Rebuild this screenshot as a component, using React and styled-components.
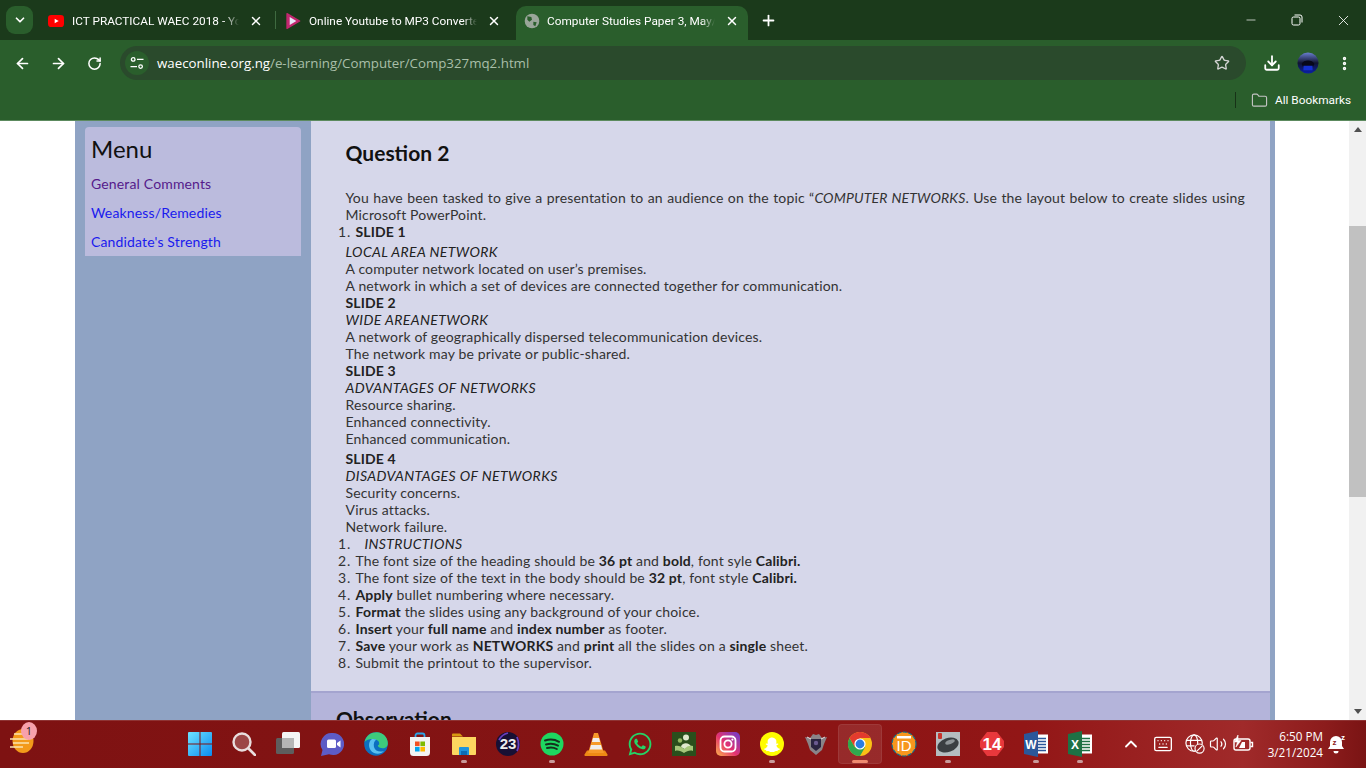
import React from "react";
import styled, { createGlobalStyle } from "styled-components";
import { ArrowLeft, ArrowRight, RotateCw, Star, Download, EllipsisVertical, Folder, X, Plus, Minus, ChevronDown, ChevronUp, Keyboard, Volume2 } from "lucide-react";
import { FaWhatsapp, FaSnapchatGhost } from "react-icons/fa";

const GlobalStyle = createGlobalStyle`
  html, body { margin: 0; padding: 0; height: 100%; overflow: hidden; }
  * { box-sizing: border-box; }
`;

const uiFont = `"Open Sans", "Noto Sans", sans-serif`;
const pageFont = `Lato, "Open Sans", sans-serif`;

const Screen = styled.div`
  width: 1366px;
  height: 768px;
  display: flex;
  flex-direction: column;
  overflow: hidden;
  font-family: ${uiFont};
`;

/* browser chrome */
const TabStrip = styled.div`
  height: 40px;
  flex: none;
  display: flex;
  align-items: flex-end;
  background: #1b3a1b;
  padding-left: 6px;
  color: #fff;
`;
const TabMenuButton = styled.div`
  width: 27px;
  height: 28px;
  margin-bottom: 6px;
  margin-right: 9px;
  border-radius: 9px;
  background: #2a5e2c;
  display: flex;
  align-items: center;
  justify-content: center;
`;
const Tab = styled.div`
  width: ${(p) => p.$w}px;
  height: 34px;
  display: flex;
  align-items: center;
  padding: 0 ${(p) => p.$end}px 5px ${(p) => p.$pad}px;
  position: relative;
  background: ${(p) => (p.$active ? "#2a5e2c" : "transparent")};
  border-radius: 10px 10px 0 0;
`;
const TabTitle = styled.span`
  flex: 1;
  margin: 0 10px 0 ${(p) => p.$gap}px;
  font-family: Roboto, sans-serif;
  font-size: 11.8px;
  white-space: nowrap;
  overflow: hidden;
  color: #fff;
  -webkit-mask-image: linear-gradient(to right, #000 92%, transparent);
  mask-image: linear-gradient(to right, #000 92%, transparent);
`;
const TabSeparator = styled.div`
  width: 1px;
  height: 18px;
  margin: 0 -1px 11px 0;
  background: #3f6a40;
`;
const NewTab = styled.div`
  width: 40px;
  height: 34px;
  padding-bottom: 6px;
  display: flex;
  align-items: center;
  justify-content: center;
`;
const WindowButtons = styled.div`
  margin-left: auto;
  display: flex;
  height: 40px;
  align-items: center;
`;
const WindowButton = styled.div`
  width: 46px;
  display: flex;
  justify-content: center;
  color: #fff;
`;

const Toolbar = styled.div`
  height: 40px;
  flex: none;
  display: flex;
  align-items: center;
  background: #2a5e2c;
  color: #fff;
  padding: 6px 0 0 4px;
`;
const NavButton = styled.div`
  width: 36px;
  display: flex;
  justify-content: center;
`;
const AddressBar = styled.div`
  width: 1126px;
  height: 34px;
  margin-left: 8px;
  border-radius: 17px;
  background: #2a4a2c;
  display: flex;
  align-items: center;
  padding: 0 16px 0 5px;
`;
const SiteChip = styled.div`
  width: 24px;
  height: 24px;
  border-radius: 50%;
  background: #2a5e2c;
  display: flex;
  align-items: center;
  justify-content: center;
`;
const Url = styled.div`
  flex: 1;
  margin-left: 8px;
  font-size: 13.3px;
  color: #a9bfa9;
  b { font-weight: 400; color: #fff; }
`;
const ToolButtons = styled.div`
  display: flex;
  align-items: center;
  margin-left: 8px;
`;
const ToolButton = styled.div`
  width: 36px;
  display: flex;
  justify-content: center;
`;

const BookmarkBar = styled.div`
  height: 41px;
  flex: none;
  display: flex;
  align-items: center;
  justify-content: flex-end;
  background: #2a5e2c;
  border-bottom: 1px solid #5c8a5e;
  padding: 0 15px 0 0;
  color: #fff;
  font-family: Roboto, sans-serif;
  font-size: 11.8px;
`;
const BarDivider = styled.div`
  width: 1px;
  height: 16px;
  background: #173217;
  margin-right: 15px;
`;
const BookmarkLabel = styled.span`
  margin-left: 7px;
`;

/* web page */
const Viewport = styled.div`
  flex: 1;
  display: flex;
  min-height: 0;
  background: #fff;
  font-family: ${pageFont};
`;
const PageArea = styled.div`
  flex: 1;
  padding-left: 75px;
  overflow: hidden;
`;
const Wrapper = styled.div`
  width: 1200px;
  height: 100%;
  display: flex;
  background: #8fa3c4;
`;
const Sidebar = styled.aside`
  width: 236px;
  flex: none;
  padding: 6px 10px;
`;
const MenuCard = styled.nav`
  height: 129px;
  background: #bbbbdd;
  border-radius: 4px 4px 0 0;
  padding: 8px 6px;
`;
const MenuTitle = styled.h3`
  margin: 0 0 11px;
  font-size: 24px;
  line-height: 28px;
  font-weight: 400;
  color: #111;
`;
const MenuLink = styled.a`
  display: block;
  height: 29px;
  line-height: 19px;
  font-size: 14px;
  letter-spacing: 0.15px;
  color: ${(p) => (p.$visited ? "#551a8b" : "#1a1aee")};
`;
const Main = styled.main`
  width: 959px;
  flex: none;
  display: flex;
  flex-direction: column;
`;
const QuestionSection = styled.section`
  height: 570px;
  flex: none;
  background: #d6d7ea;
  padding: 20px 25px 0 34.5px;
  color: #333;
  font-size: 14px;
  line-height: 17px;
  letter-spacing: 0.15px;
`;
const Heading = styled.h2`
  margin: 0 0 24px;
  font-size: 21px;
  line-height: 24px;
  font-weight: 700;
  letter-spacing: 0;
  color: #111;
`;
const Para = styled.p`
  margin: 0;
  text-align: ${(p) => (p.$justify ? "justify" : "left")};
`;
const Slide = styled.strong`
  display: block;
  font-weight: 700;
  color: #222;
  margin-top: ${(p) => p.$top || 0}px;
`;
const Topic = styled.em`
  display: block;
  font-style: italic;
  letter-spacing: 0.4px;
  color: #222;
  margin-top: ${(p) => p.$top || 0}px;
`;
const NumberList = styled.ol`
  margin: 0;
  padding: 0 0 0 10px;
  b { font-weight: 700; color: #222; }
  li::marker { letter-spacing: 0.8px; }
`;
const Indented = styled.em`
  margin-left: 9px;
  letter-spacing: 0.35px;
  color: #222;
`;
const ObservationSection = styled.section`
  flex: 1;
  background: #b4b4da;
  border-top: 2px solid #a4a4cf;
  padding: 14px 0 0 25px;
  overflow: hidden;
`;
const Scrollbar = styled.div`
  width: 17px;
  flex: none;
  background: #f1f1f1;
  display: flex;
  flex-direction: column;
  align-items: center;
  justify-content: space-between;
  position: relative;
  padding: 6px 0;
`;
const ScrollThumb = styled.div`
  position: absolute;
  left: 0;
  top: 105px;
  width: 17px;
  height: 271px;
  background: #c1c1c1;
`;
const ArrowUp = styled.div`
  width: 0;
  height: 0;
  border: 4px solid transparent;
  border-top: 0;
  border-bottom: 5px solid #505050;
`;
const ArrowDown = styled(ArrowUp)`
  transform: rotate(180deg);
`;

/* taskbar */
const Taskbar = styled.footer`
  height: 48px;
  flex: none;
  display: flex;
  align-items: center;
  padding-bottom: 1px;
  background: linear-gradient(90deg, #7e1212 0%, #851414 45%, #921616 75%, #a02a2a 91%, #8c1c1c 97%, #7a1414 100%);
  border-top: 1px solid #8f3434;
  color: #fff;
`;
const Weather = styled.div`
  width: 178px;
  flex: none;
  padding: 0 0 6px 9px;
  position: relative;
  display: flex;
`;
const WeatherBadge = styled.span`
  position: absolute;
  left: 21px;
  top: -6px;
  width: 16px;
  height: 18px;
  border-radius: 50%;
  background: #f7a1ab;
  color: #222;
  font-size: 11px;
  line-height: 18px;
  text-align: center;
`;
const Pinned = styled.div`
  display: flex;
  align-items: center;
`;
const Slot = styled.div`
  width: 44px;
  height: 40px;
  display: flex;
  align-items: center;
  justify-content: center;
  position: relative;
  border-radius: 4px;
  background: ${(p) => (p.$active ? "rgba(255,255,255,0.09)" : "transparent")};
  box-shadow: ${(p) => (p.$active ? "inset 0 0 0 1px rgba(255,255,255,0.07)" : "none")};
  &::after {
    content: "";
    display: ${(p) => (p.$active || p.$open ? "block" : "none")};
    position: absolute;
    bottom: 1px;
    left: 50%;
    transform: translateX(-50%);
    width: ${(p) => (p.$active ? 16 : 6)}px;
    height: 3px;
    border-radius: 2px;
    background: ${(p) => (p.$active ? "#f08a70" : "#c99a9a")};
  }
`;
const Tray = styled.div`
  margin-left: auto;
  display: flex;
  align-items: center;
  padding-right: 18px;
`;
const TrayIcon = styled.div`
  width: ${(p) => p.$w}px;
  display: flex;
  justify-content: center;
`;
const Clock = styled.div`
  width: 58px;
  font-size: 11.7px;
  line-height: 16px;
  text-align: right;
  white-space: nowrap;
  margin: 0 5px 0 7px;
`;

const Svg = ({ size = 24, children }) => (
  <svg width={size} height={size} viewBox="0 0 24 24">{children}</svg>
);

const YoutubeFav = () => (
  <Svg size={16}><rect x="0" y="3" width="24" height="18" rx="5" fill="#f00" /><path d="M10 8.5l6 3.5-6 3.5z" fill="#fff" /></Svg>
);
const PlayFav = () => (
  <Svg size={16}><path d="M3 1l19 11L3 23z" fill="#c2276f" stroke="#c2276f" strokeWidth="2" strokeLinejoin="round" /><path d="M7 6l10 6-10 6z" fill="#e8e6f8" /></Svg>
);
const GlobeFav = () => (
  <Svg size={16}><circle cx="12" cy="12" r="11" fill="#9aa69a" /><path d="M5 5l6 1 1 4-4 3-3-3zM14 13l5 1-2 6-3-2z" fill="#2a5e2c" /></Svg>
);
const TuneIcon = () => (
  <svg width="14" height="14" viewBox="0 0 14 14" fill="none" stroke="#fff" strokeWidth="1.3">
    <circle cx="3.2" cy="3.4" r="1.8" /><path d="M7 3.4h6.5M.5 10.6H7" /><circle cx="10.6" cy="10.6" r="1.8" />
  </svg>
);
const RestoreIcon = () => (
  <svg width="12" height="12" viewBox="0 0 12 12" fill="none" stroke="#fff" strokeWidth="1">
    <rect x="1" y="3" width="8" height="8" rx="1.5" /><path d="M3.5 1h5.5a2 2 0 0 1 2 2v5.5" />
  </svg>
);
const Avatar = () => (
  <Svg size={22}>
    <defs><linearGradient id="av" x1="0" y1="0" x2="0" y2="1"><stop offset="0" stopColor="#6a7fd0" /><stop offset="0.5" stopColor="#101430" /><stop offset="1" stopColor="#0a1fa8" /></linearGradient></defs>
    <circle cx="12" cy="12" r="11.5" fill="url(#av)" />
    <path d="M5 13c2-5 12-5 14 0l-2 4H7z" fill="#08081a" />
    <rect x="7" y="15" width="10" height="5" fill="#1430d0" />
  </Svg>
);

const WeatherIcon = () => (
  <svg width="26" height="26" viewBox="0 0 26 26">
    <ellipse cx="14" cy="13" rx="10.5" ry="12" fill="#f39a1a" />
    <path d="M5 6h12M1 11h18M4 15h16M1 19h13" stroke="#fbe3b0" strokeWidth="1.6" />
  </svg>
);
const WinLogo = () => (
  <svg width="24" height="24" viewBox="0 0 24 24">
    <defs><linearGradient id="win" x1="0" y1="0" x2="1" y2="1"><stop offset="0" stopColor="#6fe3ff" /><stop offset="1" stopColor="#0a8cf0" /></linearGradient></defs>
    <path d="M1 0h10.500v11.500H0V1a1 1 0 0 1 1-1zM12.500 0H23a1 1 0 0 1 1 1v10.500H12.500zM0 12.500h11.500V24H1a1 1 0 0 1-1-1zM12.500 12.500H24V23a1 1 0 0 1-1 1H12.500z" fill="url(#win)" />
  </svg>
);
const SearchGlyph = () => (
  <svg width="24" height="24" viewBox="0 0 24 24" fill="none">
    <circle cx="10" cy="10" r="8.500" fill="rgba(255,255,255,0.22)" stroke="#e9dede" strokeWidth="2.400" />
    <path d="M16.500 16.500L23 23" stroke="#e9dede" strokeWidth="2.600" strokeLinecap="round" />
  </svg>
);
const TaskView = () => (
  <Svg>
    <rect x="6" y="0" width="18" height="16" rx="1.500" fill="#f4f4f4" />
    <rect x="0" y="6" width="18" height="16" rx="1.500" fill="#5e5e5e" />
    <rect x="6" y="6" width="12" height="10" fill="#b5b5b5" />
  </Svg>
);
const MeetIcon = () => (
  <Svg>
    <path d="M13 1a11 11 0 1 1-4 21.200L1 24l1.500-6A11 11 0 0 1 13 1z" fill="#5d5cc6" />
    <rect x="7" y="7.500" width="9" height="8.500" rx="1.500" fill="#fff" /><path d="M17 11l3.500-2.500v7L17 13z" fill="#fff" />
  </Svg>
);
const EdgeIcon = () => (
  <Svg>
    <circle cx="12" cy="12" r="11.800" fill="#0c6fc0" />
    <path d="M.5 10C2 3 8 0 13 .2c6 .3 10.800 5 10.800 11 0 3.500-2.300 5-5 5-2.500 0-4.800-.8-5-3 2.500 0 2-5.500-3.300-6C6 6.800 2 8 .5 10z" fill="#3ecb7c" />
    <path d="M8 7c-4.500 3-4 11 2 14 3.500 1.500 7.500.8 10-2-4 1.500-9 .2-10-4-.7-3 .2-6.200 2.500-7.500C11 7 9.500 6.800 8 7z" fill="#5ac0f0" />
  </Svg>
);
const StoreIcon = () => (
  <Svg>
    <path d="M7.500 6V3.500a2 2 0 0 1 2-2h5a2 2 0 0 1 2 2V6" fill="none" stroke="#2ba6e8" strokeWidth="1.800" />
    <path d="M2 5h20v15.500a3.500 3.500 0 0 1-3.500 3.500h-13A3.500 3.500 0 0 1 2 20.500z" fill="#f3f3f3" />
    <rect x="7" y="9.500" width="4.600" height="4.600" fill="#f25022" /><rect x="12.400" y="9.500" width="4.600" height="4.600" fill="#7fba00" />
    <rect x="7" y="14.900" width="4.600" height="4.600" fill="#00a4ef" /><rect x="12.400" y="14.900" width="4.600" height="4.600" fill="#ffb900" />
  </Svg>
);
const ExplorerIcon = () => (
  <Svg>
    <path d="M0 2.500a1 1 0 0 1 1-1h7l3 3H0z" fill="#d89a12" />
    <path d="M0 5h24v17a1 1 0 0 1-1 1H1a1 1 0 0 1-1-1z" fill="#fcd660" />
    <path d="M7 16a1 1 0 0 1 1-1h8a1 1 0 0 1 1 1v7H7z" fill="#1e94dc" />
    <rect x="9" y="19" width="6" height="4" fill="#0c6cb4" />
  </Svg>
);
const Badge23 = () => (
  <svg width="24" height="24" viewBox="0 0 24 24" fontFamily="Liberation Sans, sans-serif">
    <circle cx="12" cy="12" r="12" fill="#181034" />
    <path d="M3 8C5 4 8 2 12 1M21 5c2 5 2 10 0 14" stroke="#6a3fc0" strokeWidth="1.800" fill="none" />
    <text x="12" y="17" textAnchor="middle" fontSize="15" fontWeight="700" fill="#eee">23</text>
  </svg>
);
const Spotify = () => (
  <Svg>
    <circle cx="12" cy="12" r="11.500" fill="#1ed760" />
    <path d="M5 8.500c5-1.500 10-1 14 1.300M6 12.500c4-1.200 8.500-.8 12 1.100M7 16c3.500-1 7-.6 9.800 1" stroke="#15301e" strokeWidth="2" strokeLinecap="round" fill="none" />
  </Svg>
);
const Vlc = () => (
  <Svg>
    <path d="M3 18.500h18l2.500 4a1 1 0 0 1-1 1.500H1.500a1 1 0 0 1-1-1.500z" fill="#ee8a14" />
    <path d="M10 1h4l6 20H4z" fill="#f79a2a" />
    <path d="M9 6h6l1.100 4H7.900zM7 13h10l1.200 4.500H5.800z" fill="#f0eeee" />
  </Svg>
);
const BookIcon = () => (
  <Svg>
    <rect width="24" height="24" fill="#2a4f1c" />
    <circle cx="14" cy="5.500" r="3" fill="#dfe9cd" />
    <circle cx="8" cy="8.500" r="2.200" fill="#93b862" />
    <path d="M9 15c.5-5 9-5 10 0l-5 3z" fill="#dfe9cd" />
    <path d="M3 14c3-1 6 0 9 3 3-3 6-4 9-3v5c-3-1-6 0-9 2-3-2-6-3-9-2z" fill="#a5c77a" />
  </Svg>
);
const Instagram = () => (
  <svg width="24" height="24" viewBox="0 0 24 24" fill="none">
    <defs><linearGradient id="ig" x1="0" y1="1" x2="1" y2="0"><stop offset="0" stopColor="#fdb44b" /><stop offset="0.45" stopColor="#e5326f" /><stop offset="1" stopColor="#6a3ed0" /></linearGradient></defs>
    <rect width="24" height="24" rx="5" fill="url(#ig)" />
    <rect x="4.500" y="4.500" width="15" height="15" rx="4" stroke="#fff" strokeWidth="1.800" />
    <circle cx="12" cy="12" r="3.600" stroke="#fff" strokeWidth="1.800" />
    <circle cx="16.400" cy="7.600" r="1.100" fill="#fff" />
  </svg>
);
const Snapchat = () => (
  <Svg>
    <circle cx="12" cy="12" r="12" fill="#fffc00" />
    <foreignObject x="4" y="4" width="16" height="16"><FaSnapchatGhost size={16} color="#fff" /></foreignObject>
  </Svg>
);
const ShieldIcon = () => (
  <Svg>
    <path d="M1 5l5 1 3-4 3 1 3-1 3 4 5-1-3 7-2 6-6 5-6-5-2-6z" fill="#8a8488" />
    <path d="M7 7h10v8l-5 4-5-4z" fill="#2a2440" />
    <circle cx="12" cy="11" r="2.200" fill="#6a5a90" />
    <path d="M3 5l4 2M21 5l-4 2" stroke="#e6e0e4" strokeWidth="1" />
  </Svg>
);
const ChromeIcon = () => (
  <Svg>
    <circle cx="12" cy="12" r="12" fill="#fbc116" />
    <path d="M1.600 6A12 12 0 0 0 12 24l5.200-9H6.800z" fill="#2fa84f" />
    <path d="M1.600 6a12 12 0 0 1 20.800 0H12l-5.200 9z" fill="#e33b2e" />
    <circle cx="12" cy="12" r="5.600" fill="#fff" /><circle cx="12" cy="12" r="4.400" fill="#2a7de1" />
  </Svg>
);
const IdIcon = () => (
  <svg width="26" height="26" viewBox="0 0 26 26" fontFamily="Liberation Sans, sans-serif">
    <circle cx="13" cy="13" r="12" fill="#f7971e" stroke="#0d6f8f" strokeWidth="1.200" strokeDasharray="4 1.500" />
    <path d="M6 5h14v2.500H6z" fill="#fff" />
    <text x="13" y="20" textAnchor="middle" fontSize="15" fontWeight="400" fill="#fff">ID</text>
  </svg>
);
const MouseIcon = () => (
  <Svg>
    <rect width="24" height="24" fill="#b4bdc0" />
    <ellipse cx="12" cy="13" rx="11" ry="7" transform="rotate(-20 12 13)" fill="#3a3f42" />
    <ellipse cx="14" cy="10" rx="5" ry="2" transform="rotate(-20 14 10)" fill="#8d9497" />
    <rect x="2" y="1" width="4" height="6" rx="1" fill="#c8342c" />
  </Svg>
);
const Hex14 = () => (
  <svg width="24" height="24" viewBox="0 0 24 24" fontFamily="Liberation Sans, sans-serif">
    <path d="M7 0h10l7 9v6l-7 9H7l-7-9V9z" fill="#e8383c" />
    <text x="12" y="18" textAnchor="middle" fontSize="17" fontWeight="700" fill="#fff">14</text>
  </svg>
);
const OfficeDoc = ({ color, letter, line }) => (
  <svg width="24" height="26" viewBox="0 0 24 26" fontFamily="Liberation Sans, sans-serif">
    <rect x="10" y="3.500" width="14" height="19" fill="#fff" />
    <path d="M14 7.500h8M14 10.500h8M14 13.500h8M14 16.500h8M14 19.500h8" stroke={line} strokeWidth="1.300" />
    <path d="M0 3l14-3v26L0 23z" fill={color} />
    <text x="7" y="17.500" textAnchor="middle" fontSize="12" fontWeight="700" fill="#fff">{letter}</text>
  </svg>
);
const NoNetGlobe = () => (
  <svg width="20" height="20" viewBox="0 0 22 22" fill="none" stroke="#fff" strokeWidth="1.300">
    <circle cx="10" cy="10" r="9" />
    <ellipse cx="10" cy="10" rx="4" ry="9" />
    <path d="M1.500 7h17M1.500 13h9" />
    <circle cx="16" cy="16" r="5" fill="#9a2424" />
    <path d="M12.800 19.200l6.400-6.400" />
  </svg>
);
const BatteryBolt = () => (
  <svg width="24" height="20" viewBox="0 0 24 20" fill="none" stroke="#fff" strokeWidth="1.400">
    <rect x="3" y="5" width="16" height="11" rx="2" />
    <path d="M19.500 8.500h2v4h-2" />
    <path d="M7 1L3.500 8h3L5 13l5-6.500H7z" fill="#fff" strokeWidth="0.600" />
    <path d="M8 14l3-6h3v6z" fill="#fff" stroke="none" />
  </svg>
);
const SnoozeBell = () => (
  <svg width="20" height="22" viewBox="0 0 20 22" fontFamily="Liberation Sans, sans-serif" fill="#fff">
    <path d="M8 3a6 6 0 0 1 6 6v4l2 3H0l2-3V9a6 6 0 0 1 6-6z" />
    <path d="M5.500 18a2.500 2.500 0 0 0 5 0z" />
    <text x="4.500" y="12" fontSize="8" fontWeight="700" fill="#8c1c1c">z</text>
    <text x="13" y="6.500" fontSize="8" fontWeight="700">z</text>
  </svg>
);

const pinned = [
  { id: "win", icon: <WinLogo /> },
  { id: "search", icon: <SearchGlyph /> },
  { id: "view", icon: <TaskView /> },
  { id: "meet", icon: <MeetIcon /> },
  { id: "edge", icon: <EdgeIcon /> },
  { id: "store", icon: <StoreIcon /> },
  { id: "files", icon: <ExplorerIcon />, open: true },
  { id: "23", icon: <Badge23 /> },
  { id: "spotify", icon: <Spotify />, open: true },
  { id: "vlc", icon: <Vlc /> },
  { id: "wa", icon: <FaWhatsapp size={26} color="#25d366" /> },
  { id: "book", icon: <BookIcon /> },
  { id: "ig", icon: <Instagram /> },
  { id: "snap", icon: <Snapchat />, open: true },
  { id: "shield", icon: <ShieldIcon /> },
  { id: "chrome", icon: <ChromeIcon />, active: true },
  { id: "id", icon: <IdIcon /> },
  { id: "mouse", icon: <MouseIcon />, open: true },
  { id: "14", icon: <Hex14 /> },
  { id: "word", icon: <OfficeDoc color="#2b579a" letter="W" line="#2b579a" />, open: true },
  { id: "excel", icon: <OfficeDoc color="#1e7145" letter="X" line="#1e7145" />, open: true },
];

const App = () => (
  <Screen>
    <GlobalStyle />
    <TabStrip>
      <TabMenuButton><ChevronDown size={14} strokeWidth={3} /></TabMenuButton>
      <Tab $w={233} $pad={6} $end={12}>
        <YoutubeFav />
        <TabTitle $gap={8}>ICT PRACTICAL WAEC 2018 - YouTube</TabTitle>
        <X size={14} strokeWidth={2.5} />
      </Tab>
      <TabSeparator />
      <Tab $w={241} $pad={10} $end={15}>
        <PlayFav />
        <TabTitle $gap={8}>Online Youtube to MP3 Converter</TabTitle>
        <X size={14} strokeWidth={2.5} />
      </Tab>
      <Tab $w={232} $pad={8} $end={9} $active>
        <GlobeFav />
        <TabTitle $gap={7}>Computer Studies Paper 3, May/June</TabTitle>
        <X size={14} strokeWidth={2.5} />
      </Tab>
      <NewTab><Plus size={17} strokeWidth={2.5} /></NewTab>
      <WindowButtons>
        <WindowButton><Minus size={14} strokeWidth={1.2} /></WindowButton>
        <WindowButton><RestoreIcon /></WindowButton>
        <WindowButton><X size={17} strokeWidth={1.2} /></WindowButton>
      </WindowButtons>
    </TabStrip>
    <Toolbar>
      <NavButton><ArrowLeft size={17} strokeWidth={2.4} /></NavButton>
      <NavButton><ArrowRight size={17} strokeWidth={2.4} /></NavButton>
      <NavButton><RotateCw size={15} strokeWidth={2.4} /></NavButton>
      <AddressBar>
        <SiteChip><TuneIcon /></SiteChip>
        <Url><b>waeconline.org.ng</b>/e-learning/Computer/Comp327mq2.html</Url>
        <Star size={16} color="#d4d4d4" strokeWidth={2} />
      </AddressBar>
      <ToolButtons>
        <ToolButton><Download size={18} strokeWidth={2.4} /></ToolButton>
        <ToolButton><Avatar /></ToolButton>
        <ToolButton><EllipsisVertical size={17} strokeWidth={2.8} /></ToolButton>
      </ToolButtons>
    </Toolbar>
    <BookmarkBar>
      <BarDivider />
      <Folder size={17} color="#c4c4c4" strokeWidth={1.6} />
      <BookmarkLabel>All Bookmarks</BookmarkLabel>
    </BookmarkBar>
    <Viewport>
      <PageArea>
        <Wrapper>
          <Sidebar>
            <MenuCard>
              <MenuTitle>Menu</MenuTitle>
              <MenuLink $visited>General Comments</MenuLink>
              <MenuLink>Weakness/Remedies</MenuLink>
              <MenuLink>Candidate's Strength</MenuLink>
            </MenuCard>
          </Sidebar>
          <Main>
            <QuestionSection>
              <Heading>Question 2</Heading>
              <Para $justify>You have been tasked to give a presentation to an audience on the topic “<em>COMPUTER NETWORKS</em>. Use the layout below to create slides using Microsoft PowerPoint.</Para>
              <NumberList>
                <li><b>SLIDE 1</b></li>
              </NumberList>
              <Topic $top={3}>LOCAL AREA NETWORK</Topic>
              <Para>A computer network located on user’s premises.</Para>
              <Para>A network in which a set of devices are connected together for communication.</Para>
              <Slide>SLIDE 2</Slide>
              <Topic>WIDE AREANETWORK</Topic>
              <Para>A network of geographically dispersed telecommunication devices.</Para>
              <Para>The network may be private or public-shared.</Para>
              <Slide>SLIDE 3</Slide>
              <Topic>ADVANTAGES OF NETWORKS</Topic>
              <Para>Resource sharing.</Para>
              <Para>Enhanced connectivity.</Para>
              <Para>Enhanced communication.</Para>
              <Slide $top={3}>SLIDE 4</Slide>
              <Topic>DISADVANTAGES OF NETWORKS</Topic>
              <Para>Security concerns.</Para>
              <Para>Virus attacks.</Para>
              <Para>Network failure.</Para>
              <NumberList>
                <li><Indented>INSTRUCTIONS</Indented></li>
                <li>The font size of the heading should be <b>36 pt</b> and <b>bold</b>, font syle <b>Calibri.</b></li>
                <li>The font size of the text in the body should be <b>32 pt</b>, font style <b>Calibri.</b></li>
                <li><b>Apply</b> bullet numbering where necessary.</li>
                <li><b>Format</b> the slides using any background of your choice.</li>
                <li><b>Insert</b> your <b>full name</b> and <b>index number</b> as footer.</li>
                <li><b>Save</b> your work as <b>NETWORKS</b> and <b>print</b> all the slides on a <b>single</b> sheet.</li>
                <li>Submit the printout to the supervisor.</li>
              </NumberList>
            </QuestionSection>
            <ObservationSection>
              <Heading>Observation</Heading>
            </ObservationSection>
          </Main>
        </Wrapper>
      </PageArea>
      <Scrollbar>
        <ArrowUp />
        <ScrollThumb />
        <ArrowDown />
      </Scrollbar>
    </Viewport>
    <Taskbar>
      <Weather>
        <WeatherIcon />
        <WeatherBadge>1</WeatherBadge>
      </Weather>
      <Pinned>
        {pinned.map((item) => (
          <Slot key={item.id} $open={item.open} $active={item.active}>{item.icon}</Slot>
        ))}
      </Pinned>
      <Tray>
        <TrayIcon $w={26}><ChevronUp size={20} strokeWidth={2.2} /></TrayIcon>
        <TrayIcon $w={38}><Keyboard size={20} strokeWidth={1.6} /></TrayIcon>
        <TrayIcon $w={26}><NoNetGlobe /></TrayIcon>
        <TrayIcon $w={20}><Volume2 size={18} strokeWidth={1.6} /></TrayIcon>
        <TrayIcon $w={30}><BatteryBolt /></TrayIcon>
        <Clock>6:50 PM<br />3/21/2024</Clock>
        <SnoozeBell />
      </Tray>
    </Taskbar>
  </Screen>
);

export default App;
